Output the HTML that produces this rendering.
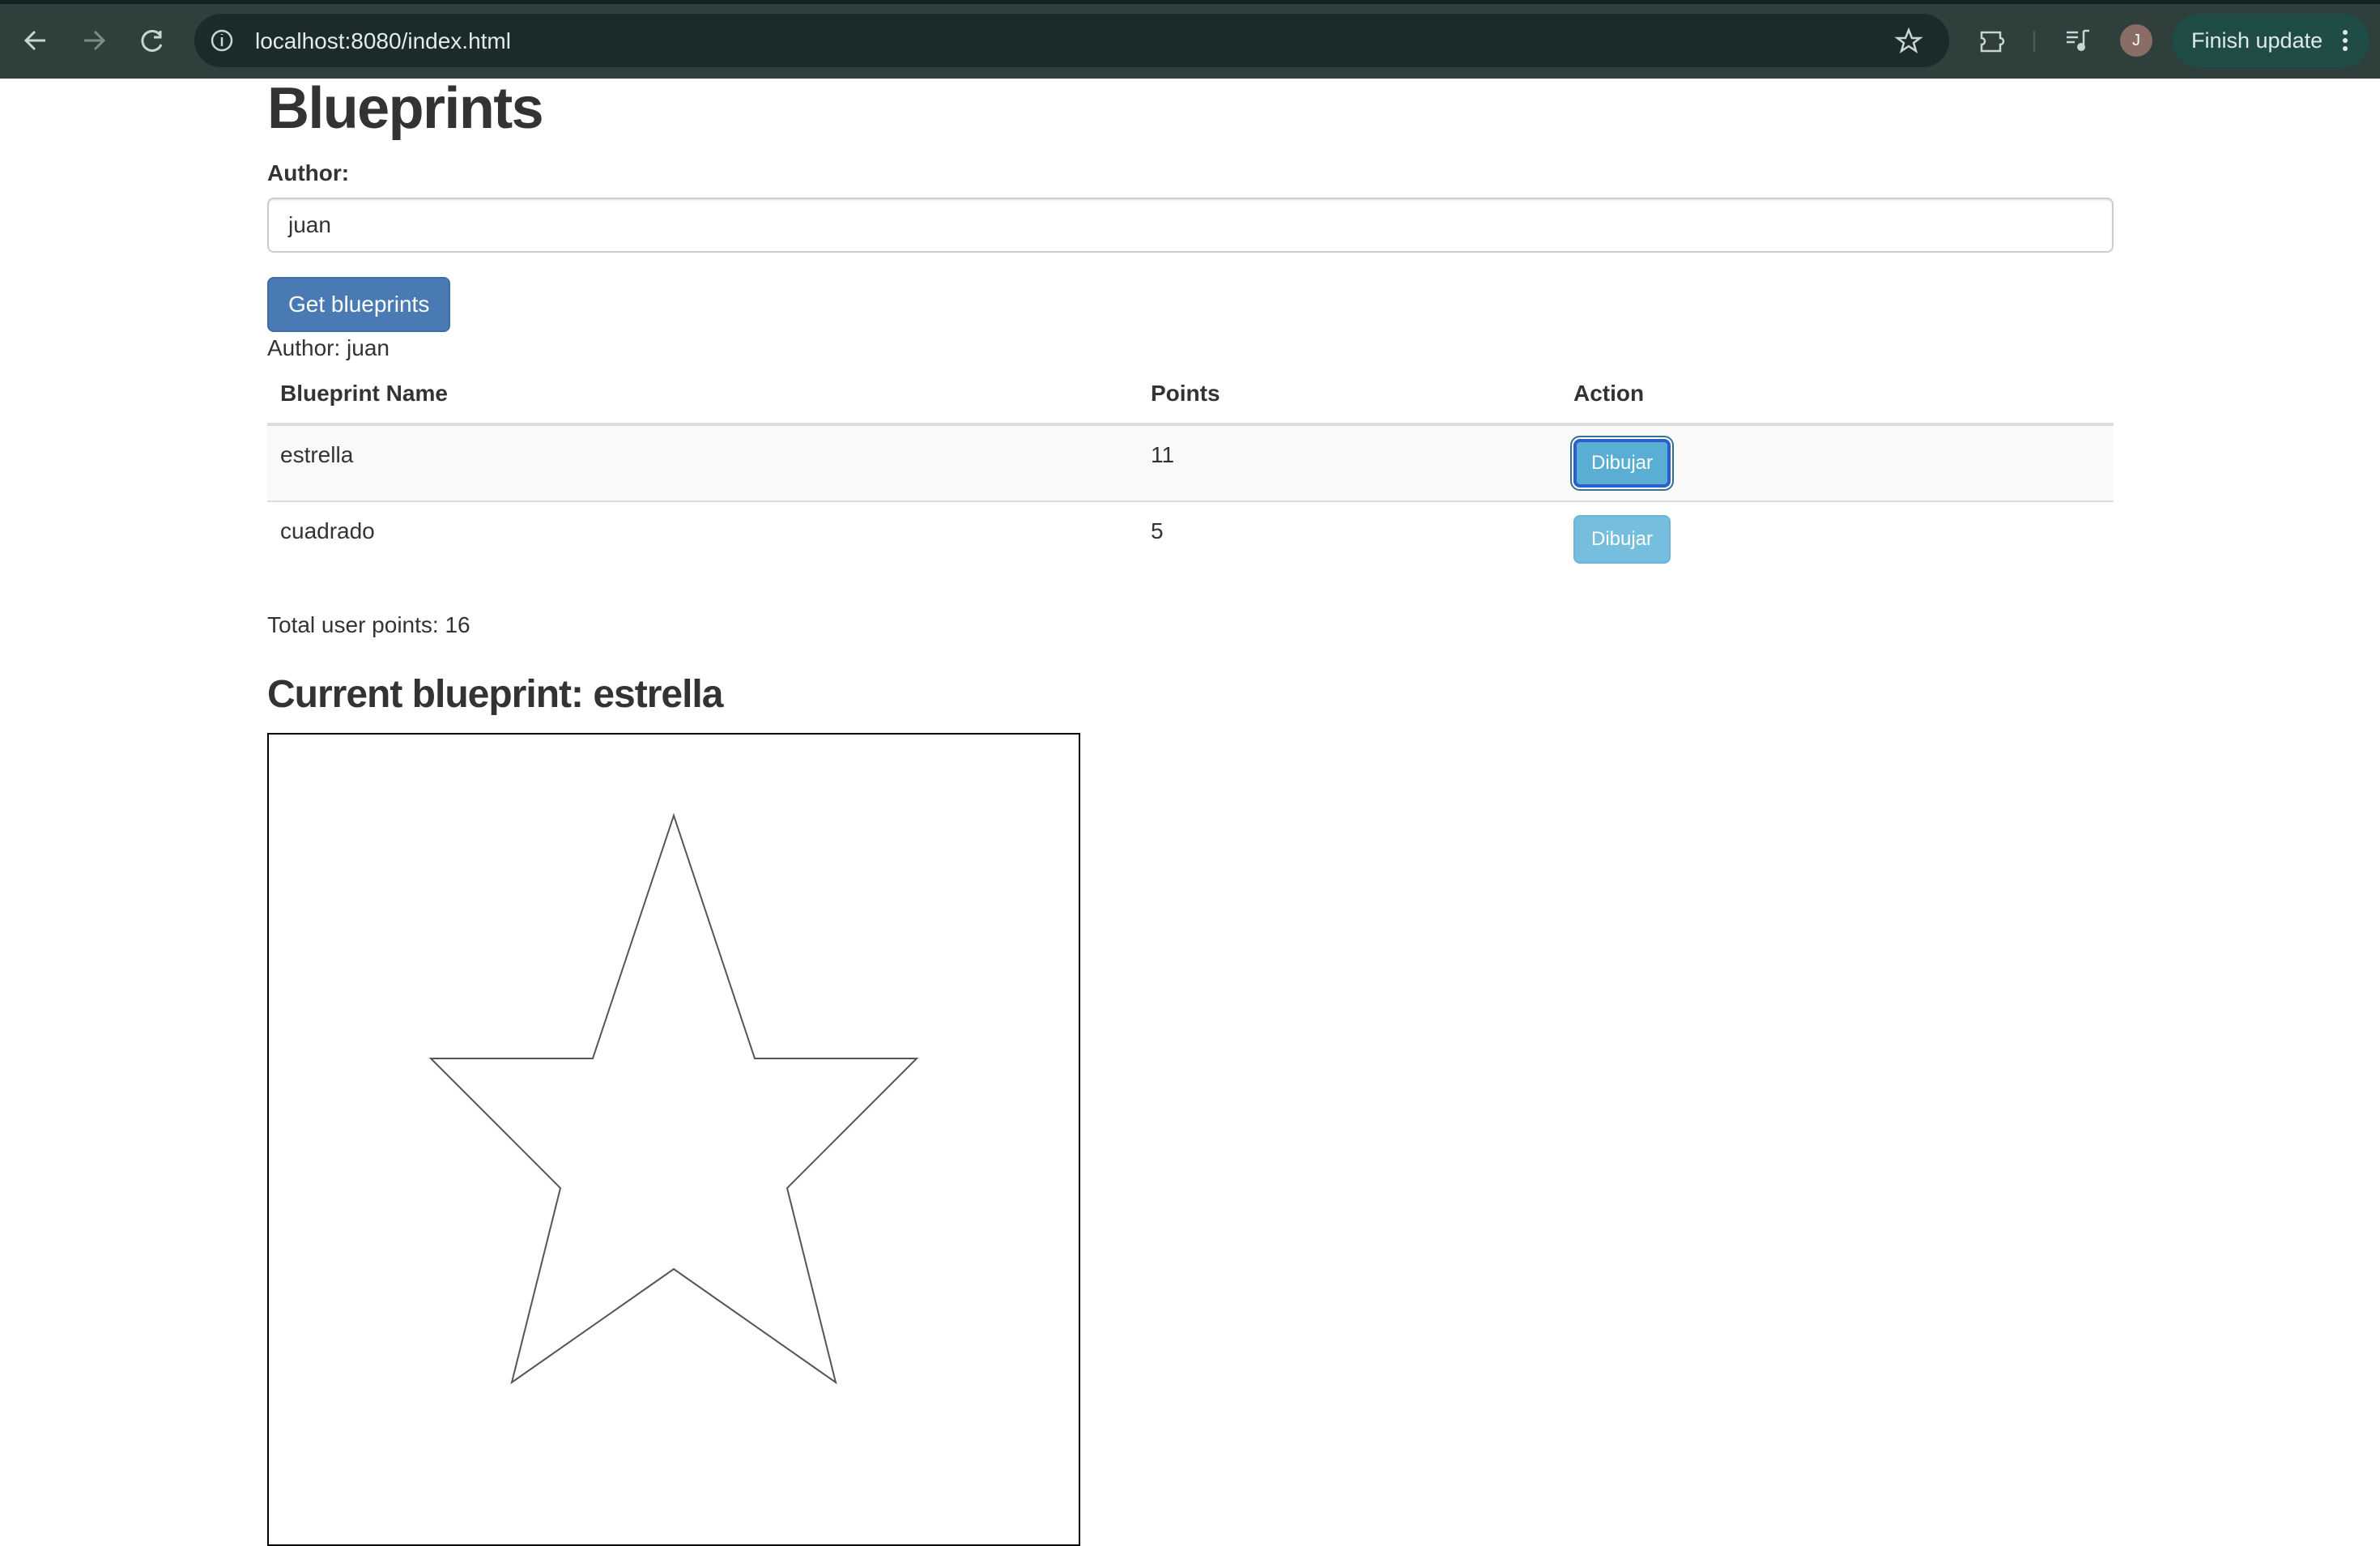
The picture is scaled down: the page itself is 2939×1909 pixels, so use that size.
<!DOCTYPE html>
<html><head><meta charset="utf-8">
<style>
*{box-sizing:border-box}
html,body{margin:0;padding:0;background:#fff;width:2939px;height:1768px;overflow:hidden}
#bar{position:absolute;left:0;top:0;width:2939px;height:97px;background:#2e3f3c;font-family:"Liberation Sans",sans-serif}
#bar .strip{position:absolute;left:0;top:0;width:2939px;height:5px;background:#142322}
#url{position:absolute;left:240px;top:17px;width:2167px;height:66px;border-radius:33px;background:#1a2b29}
#url span{position:absolute;left:75px;top:18px;font-size:28px;color:#e3ebe9}
#pill{position:absolute;left:2683px;top:17px;width:243px;height:66px;border-radius:33px;background:#1f4c47;color:#dfeae7;font-size:27px;line-height:66px;padding-left:23px}
#av{position:absolute;left:2618px;top:30px;width:40px;height:40px;border-radius:50%;background:#8a6d64;color:#fff;font-size:20px;text-align:center;line-height:40px}
#page{position:absolute;left:0;top:49.5px;width:1469.5px;zoom:2;font-family:"Liberation Sans",Helvetica,Arial,sans-serif;font-size:14px;line-height:1.42857;color:#333}
.c{margin-left:165px;width:1140px}
h1{font-size:36px;font-weight:bold;letter-spacing:-0.8px;line-height:1.1;margin:-2px 0 10px}
label{display:block;font-weight:bold;margin-bottom:5px}
.inp{height:34px;border:1px solid #ccc;border-radius:4px;padding:6px 12px;font-size:14px;box-shadow:inset 0 1px 1px rgba(0,0,0,.075);margin-bottom:15px}
.btn{display:inline-block;background:#4a7ab3;border:1px solid #3f6ea6;color:#fff;border-radius:4px;padding:6px 12px;font-size:14px;line-height:20px}
table{width:1140px;border-collapse:collapse;table-layout:fixed;margin-bottom:20px}
th,td{padding:8px;text-align:left;vertical-align:top}
th{border-bottom:2px solid #ddd}
td{border-top:1px solid #ddd}
tr.s td{background:#f9f9f9}
.d{display:inline-block;width:60px;height:30px;border-radius:4px;color:#fff;font-size:12px;line-height:26px;text-align:center}
.d1{background:#5aaed3;border:2px solid #2a5fcf;box-shadow:0 0 0 1px #fff,0 0 0 2px #31708f}
.d2{background:#76bedd;border:1px solid #6ab5d8;line-height:28px}
h3{font-size:24px;font-weight:bold;letter-spacing:-0.5px;line-height:1.1;margin:20px 0 10px}
</style></head><body>
<div id="bar"><div class="strip"></div>
<div id="url"><span>localhost:8080/index.html</span></div>
<div id="av">J</div>
<div id="pill">Finish update</div>
<svg style="position:absolute;left:0;top:0" width="2939" height="97">
<g stroke="#c9d6d3" stroke-width="3" fill="none">
<path d="M56 50H32M43 39L32 50L43 61"/>
<path d="M104 50H128M117 39L128 50L117 61" stroke="#7d8c89"/>
<path d="M198 44A12 12 0 1 0 199 55M198 38V46H190"/>
<circle cx="274" cy="50" r="12" stroke-width="2.5"/>
<path d="M274 46V57M274 42V43" stroke-width="2.5"/>
<path d="M2357 37L2361 47L2371 47L2363 53L2366 63L2357 57L2348 63L2351 53L2343 47L2353 47Z" stroke-width="2.5"/>
<path d="M2447 40H2470V47A4 4 0 0 1 2470 55V63H2447V55A4 4 0 0 0 2447 47Z" stroke-width="2.5"/>
<path d="M2512 38V64" stroke="#4c5d5a" stroke-width="2"/>
<path d="M2552 40H2566M2552 46H2566M2552 52H2562M2573 38V58M2573 38H2580" stroke-width="2.5"/>
</g>
<circle cx="2570" cy="58" r="5" fill="#c9d6d3"/>
<g fill="#dfeae7"><circle cx="2896" cy="40" r="3"/><circle cx="2896" cy="50" r="3"/><circle cx="2896" cy="60" r="3"/></g>
</svg>
</div>
<div id="page"><div class="c">
<h1>Blueprints</h1>
<label>Author:</label>
<div class="inp">juan</div>
<div class="btn">Get blueprints</div>
<div>Author: juan</div>
<table>
<tr><th style="width:537.5px">Blueprint Name</th><th style="width:261px">Points</th><th>Action</th></tr>
<tr class="s"><td>estrella</td><td>11</td><td><span class="d d1">Dibujar</span></td></tr>
<tr><td>cuadrado</td><td>5</td><td><span class="d d2">Dibujar</span></td></tr>
</table>
<div>Total user points: 16</div>
<h3>Current blueprint: estrella</h3>
<svg width="502" height="502" style="display:block">
<rect x="0.5" y="0.5" width="501" height="501" fill="#fff" stroke="#000"/>
<path d="M251 51L301 201L401 201L321 281L351 401L251 331L151 401L181 281L101 201L201 201Z" fill="none" stroke="#555" stroke-width="1"/>
</svg>
</div></div>
</body></html>
